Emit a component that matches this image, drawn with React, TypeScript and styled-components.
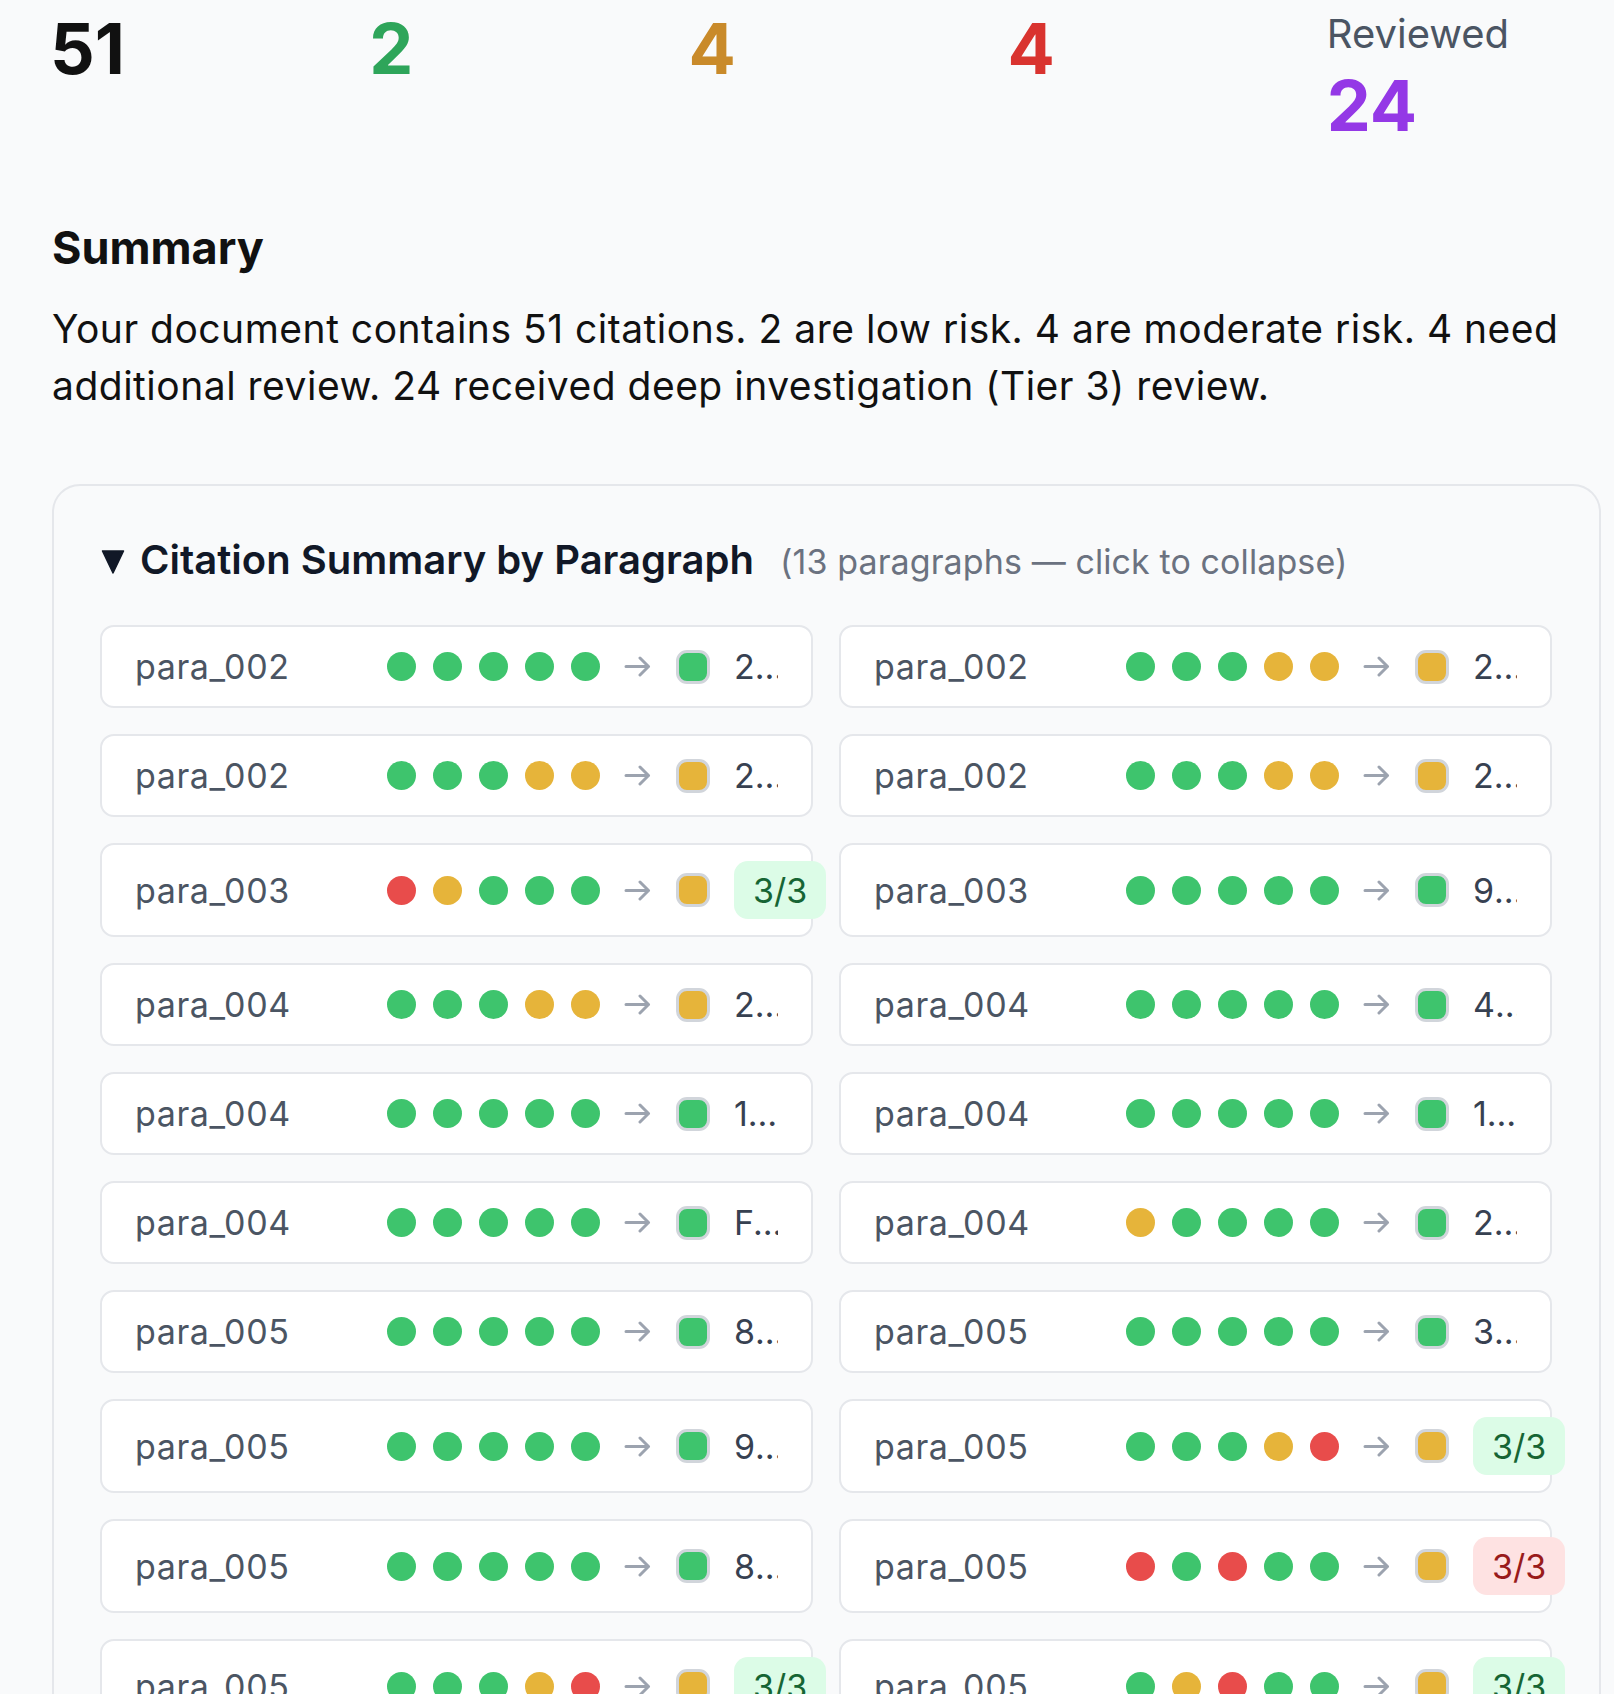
import React from 'react'
import styled, { createGlobalStyle } from 'styled-components'

type Risk = 'g' | 'y' | 'r'

interface ParagraphRow {
  id: string
  checks: Risk[]
  result: Risk
  note?: string
  badge?: { text: string; tone: 'ok' | 'bad' }
}

const riskColor: Record<Risk, string> = {
  g: '#3ec46d',
  y: '#e6b43a',
  r: '#e84c4b'
}

const parse = (s: string) => s.split('') as Risk[]

const rows: ParagraphRow[] = [
  { id: 'para_002', checks: parse('ggggg'), result: 'g', note: '2 of 5 sources confirmed' },
  { id: 'para_002', checks: parse('gggyy'), result: 'y', note: '2 minor discrepancies noted' },
  { id: 'para_002', checks: parse('gggyy'), result: 'y', note: '2 pin cites need checking' },
  { id: 'para_002', checks: parse('gggyy'), result: 'y', note: '2 quotes slightly altered' },
  { id: 'para_003', checks: parse('ryggg'), result: 'y', badge: { text: '3/3', tone: 'ok' } },
  { id: 'para_003', checks: parse('ggggg'), result: 'g', note: '9 parallel cites verified' },
  { id: 'para_004', checks: parse('gggyy'), result: 'y', note: '2 dates differ from record' },
  { id: 'para_004', checks: parse('ggggg'), result: 'g', note: '4 sources confirmed' },
  { id: 'para_004', checks: parse('ggggg'), result: 'g', note: '1 authority verified' },
  { id: 'para_004', checks: parse('ggggg'), result: 'g', note: '1 holding confirmed' },
  { id: 'para_004', checks: parse('ggggg'), result: 'g', note: 'Fully supported by record' },
  { id: 'para_004', checks: parse('ygggg'), result: 'g', note: '2 sources confirmed' },
  { id: 'para_005', checks: parse('ggggg'), result: 'g', note: '8 pages match the record' },
  { id: 'para_005', checks: parse('ggggg'), result: 'g', note: '3 reporters agree' },
  { id: 'para_005', checks: parse('ggggg'), result: 'g', note: '9 cites verified' },
  { id: 'para_005', checks: parse('gggyr'), result: 'y', badge: { text: '3/3', tone: 'ok' } },
  { id: 'para_005', checks: parse('ggggg'), result: 'g', note: '8 cites verified' },
  { id: 'para_005', checks: parse('rgrgg'), result: 'y', badge: { text: '3/3', tone: 'bad' } },
  { id: 'para_005', checks: parse('gggyr'), result: 'y', badge: { text: '3/3', tone: 'ok' } },
  { id: 'para_005', checks: parse('gyrgg'), result: 'y', badge: { text: '3/3', tone: 'ok' } },
  { id: 'para_006', checks: parse('ggggg'), result: 'g', note: '5 sources confirmed' },
  { id: 'para_006', checks: parse('ggggg'), result: 'g', note: '6 cites verified' }
]

const GlobalStyle = createGlobalStyle`
  body {
    margin: 0;
    background: #f9fafb;
    font-family: Inter, 'Noto Sans', 'Liberation Sans', sans-serif;
    color: #111;
  }
`

const Page = styled.div`
  padding: 14px 13px 0 52px;
`

const StatsRow = styled.div`
  display: grid;
  grid-template-columns: repeat(5, 1fr);
  column-gap: 45px;
  align-items: start;
  margin-left: -2px;
`

const Stat = styled.div`
  display: flex;
  flex-direction: column;
`

const StatLabel = styled.div`
  font-size: 40px;
  line-height: 1;
  color: #4b5563;
  margin-bottom: 17px;
`

const StatValue = styled.div<{ $tone: string }>`
  font-size: 70px;
  font-weight: 700;
  line-height: 1;
  color: ${p => p.$tone};
`

const SectionTitle = styled.h2`
  margin: 80px 0 0;
  font-size: 45px;
  line-height: 54px;
  font-weight: 700;
`

const SummaryText = styled.p`
  margin: 25px 0 0;
  font-size: 39px;
  letter-spacing: 0.5px;
  line-height: 57px;
`

const Panel = styled.section`
  margin-top: 70px;
  border: 2px solid #e5e7eb;
  border-radius: 28px;
  padding: 50px 47px 60px 46px;
`

const PanelHeader = styled.div`
  display: flex;
  align-items: baseline;
  line-height: 48px;
`

const Caret = styled.svg`
  align-self: center;
  width: 24px;
  height: 25px;
  margin: 0 15px 0 1px;
  flex-shrink: 0;
`

const PanelTitle = styled.span`
  font-size: 40px;
  font-weight: 600;
  color: #111827;
`

const PanelHint = styled.span`
  font-size: 34px;
  letter-spacing: 0.1px;
  color: #6b7280;
  margin-left: 26px;
`

const CardGrid = styled.div`
  display: grid;
  grid-template-columns: repeat(2, minmax(0, 1fr));
  gap: 26px;
  margin-top: 39px;
`

const Card = styled.div`
  display: flex;
  align-items: center;
  gap: 24px;
  padding: 16px 33px;
  background: #fff;
  border: 2px solid #e5e7eb;
  border-radius: 14px;
  font-size: 34px;
  line-height: 47px;
  white-space: nowrap;
  min-width: 0;
`

const ParaLabel = styled.span`
  width: 228px;
  flex-shrink: 0;
  color: #4b5563;
  letter-spacing: 0.6px;
`

const Dots = styled.div`
  display: flex;
  gap: 17px;
  flex-shrink: 0;
`

const Dot = styled.span<{ $risk: Risk }>`
  width: 29px;
  height: 29px;
  border-radius: 50%;
  background: ${p => riskColor[p.$risk]};
`

const Arrow = styled.svg`
  width: 28px;
  height: 21px;
  flex-shrink: 0;
`

const Outcome = styled.span<{ $risk: Risk }>`
  box-sizing: border-box;
  width: 34px;
  height: 34px;
  flex-shrink: 0;
  border: 3px solid #d1d5db;
  border-radius: 11px;
  background: ${p => riskColor[p.$risk]};
`

const Note = styled.span`
  flex: 1 1 auto;
  min-width: 0;
  overflow: hidden;
  text-overflow: ellipsis;
  color: #374151;
`

const Badge = styled.span<{ $tone: 'ok' | 'bad' }>`
  flex-shrink: 0;
  padding: 5.5px 19px;
  border-radius: 14px;
  background: ${p => (p.$tone === 'ok' ? '#dcfce7' : '#fee2e2')};
  color: ${p => (p.$tone === 'ok' ? '#166534' : '#991b1b')};
`

const ParagraphCard = ({ row }: { row: ParagraphRow }) => (
  <Card>
    <ParaLabel>{row.id}</ParaLabel>
    <Dots>
      {row.checks.map((c, i) => (
        <Dot key={i} $risk={c} />
      ))}
    </Dots>
    <Arrow viewBox='0 0 28 21'>
      <path
        d='M2 10.5H24.5M16 2L24.5 10.5L16 19'
        fill='none'
        stroke='#9ca3af'
        strokeWidth='3'
        strokeLinecap='round'
        strokeLinejoin='round'
      />
    </Arrow>
    <Outcome $risk={row.result} />
    {row.badge ? <Badge $tone={row.badge.tone}>{row.badge.text}</Badge> : <Note>{row.note}</Note>}
  </Card>
)

export default function App() {
  return (
    <Page>
      <GlobalStyle />
      <StatsRow>
        <Stat>
          <StatValue $tone='#111'>51</StatValue>
        </Stat>
        <Stat>
          <StatValue $tone='#2ea55a'>2</StatValue>
        </Stat>
        <Stat>
          <StatValue $tone='#c98a2a'>4</StatValue>
        </Stat>
        <Stat>
          <StatValue $tone='#d9332f'>4</StatValue>
        </Stat>
        <Stat>
          <StatLabel>Reviewed</StatLabel>
          <StatValue $tone='#9438e6'>24</StatValue>
        </Stat>
      </StatsRow>

      <SectionTitle>Summary</SectionTitle>
      <SummaryText>
        Your document contains 51 citations. 2 are low risk. 4 are moderate risk. 4 need additional review. 24
        received deep investigation (Tier 3) review.
      </SummaryText>

      <Panel>
        <PanelHeader>
          <Caret viewBox='0 0 24 25'>
            <path d='M1.5 2H22.5L12 24Z' fill='#111827' strokeLinejoin='round' stroke='#111827' strokeWidth='1.5' />
          </Caret>
          <PanelTitle>Citation Summary by Paragraph</PanelTitle>
          <PanelHint>(13 paragraphs — click to collapse)</PanelHint>
        </PanelHeader>
        <CardGrid>
          {rows.map((r, i) => (
            <ParagraphCard key={i} row={r} />
          ))}
        </CardGrid>
      </Panel>
    </Page>
  )
}
